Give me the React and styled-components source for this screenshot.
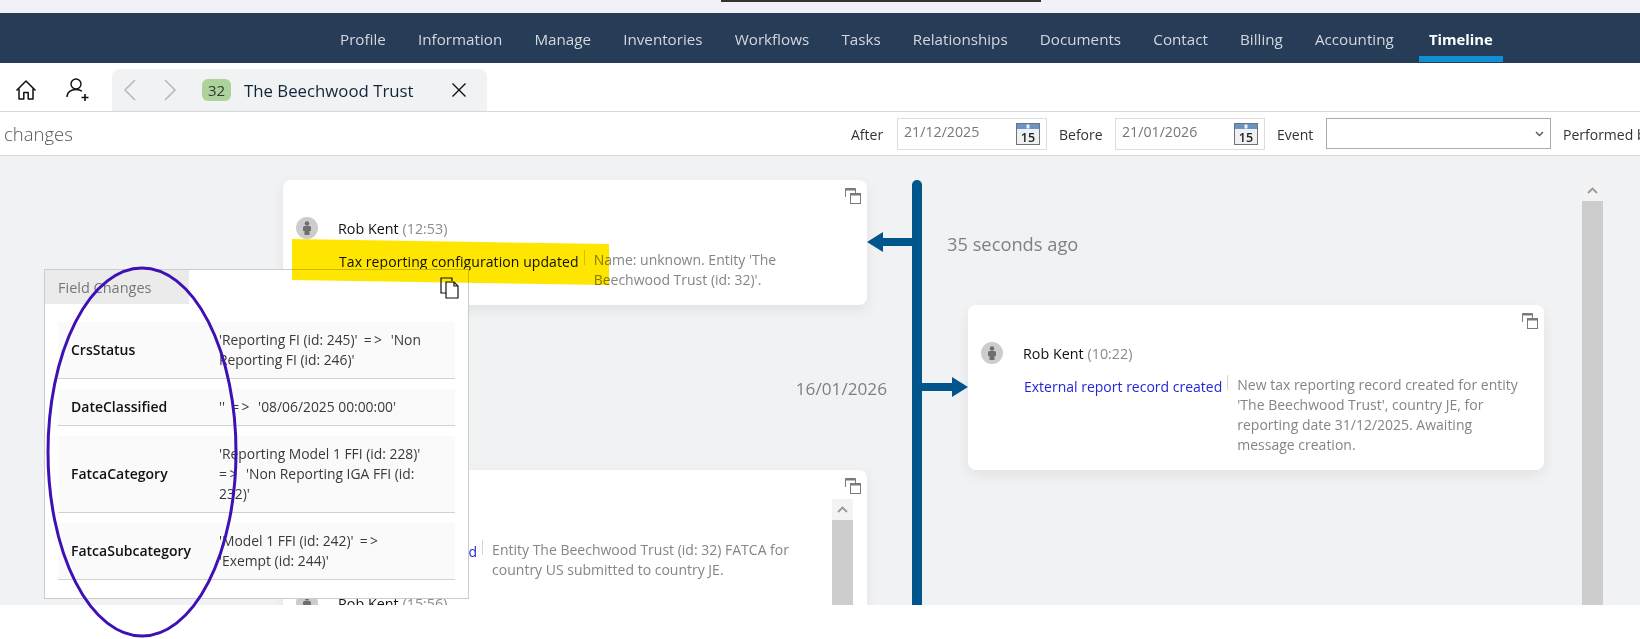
import styled, { createGlobalStyle } from 'styled-components'

const GlobalStyle = createGlobalStyle`
  html, body {
    margin: 0;
    padding: 0;
    background: #fff;
  }
  * {
    box-sizing: border-box;
  }
`

const Page = styled.div`
  position: relative;
  width: 1640px;
  height: 639px;
  overflow: hidden;
  background: #fff;
  font-family: "Open Sans", "Noto Sans", sans-serif;
  font-size: 14px;
  color: #222;
`

const TopStrip = styled.div`
  height: 13px;
  background: #f0f2f7;
  padding-left: 721px;
`

const ScreenEdge = styled.div`
  width: 320px;
  height: 2px;
  background: #333;
`

const NavBar = styled.nav`
  display: flex;
  gap: 12.2px;
  height: 50px;
  padding-left: 330px;
  background: #273c56;
`

const NavItem = styled.div`
  height: 49px;
  margin-left: ${({ $active }) => ($active ? '3px' : '0')};
  padding: 8px 10px 0;
  display: flex;
  align-items: center;
  border-bottom: 6px solid ${({ $active }) => ($active ? '#0f8fd6' : 'transparent')};
  color: ${({ $active }) => ($active ? '#fff' : '#d3d8df')};
  font-size: ${({ $active }) => ($active ? '14.8px' : '15.2px')};
  font-weight: ${({ $active }) => ($active ? 700 : 400)};
  white-space: nowrap;
`

const TabRow = styled.div`
  display: flex;
  align-items: flex-end;
  height: 49px;
  border-bottom: 1px solid #d8d8d8;
`

const QuickIcon = styled.div`
  display: flex;
  align-items: center;
  justify-content: center;
  width: ${({ $width }) => $width}px;
  height: 42px;
`

const Tab = styled.div`
  display: flex;
  align-items: center;
  width: 375px;
  height: 42px;
  background: #f0f2f4;
  border-radius: 8px 8px 0 0;
`

const TabArrow = styled.div`
  display: flex;
  justify-content: center;
  width: 40px;
  margin-left: ${({ $first }) => ($first ? '-2px' : '0')};
`

const Badge = styled.div`
  display: flex;
  align-items: center;
  justify-content: center;
  width: 29px;
  height: 22px;
  margin-left: 12px;
  border-radius: 6px;
  background: #aed29b;
  color: #2c3b34;
  font-size: 15px;
`

const TabTitle = styled.div`
  width: 207px;
  margin-left: 13px;
  color: #14233a;
  font-size: 16.8px;
  font-weight: 500;
  white-space: nowrap;
`

const FilterRow = styled.div`
  display: flex;
  align-items: center;
  height: 44px;
  border-bottom: 1px solid #d8d8d8;
  overflow: hidden;
  white-space: nowrap;
`

const ChangesTitle = styled.div`
  flex: none;
  width: 851px;
  padding-left: 4px;
  color: #555;
  font-size: 18.5px;
  font-weight: 300;
`

const FilterLabel = styled.div`
  flex: none;
  width: ${({ $width }) => $width}px;
  padding: 1px 0 0 ${({ $inset }) => ($inset ? '12px' : '0')};
  color: #333;
  font-size: 14px;
`

const DateField = styled.div`
  flex: none;
  display: flex;
  align-items: center;
  justify-content: space-between;
  width: 150px;
  height: 32px;
  padding: 0 6px;
  border: 1px solid #ddd;
`

const DateInput = styled.input`
  width: 105px;
  padding: 0 0 5px;
  border: 0;
  outline: 0;
  background: transparent;
  color: #777;
  font: 14.2px "Open Sans", sans-serif;
`

const SelectBox = styled.div`
  flex: none;
  display: flex;
  align-items: center;
  justify-content: flex-end;
  width: 225px;
  height: 31px;
  margin-right: 12px;
  padding-right: 6px;
  border: 1px solid #aaa;
`

const Main = styled.main`
  display: flex;
  height: 449px;
  padding: 24px 0 0 283px;
  background: #f0f2f4;
  overflow: hidden;
`

const LeftColumn = styled.div`
  flex: none;
  width: 584px;
`

const Spine = styled.div`
  flex: none;
  width: 10px;
  height: 100%;
  margin: 0 45px;
  background: #00568c;
  border-radius: 5px 5px 0 0;
`

const RightColumn = styled.div`
  flex: none;
  width: 576px;
  margin-left: 1px;
`

const Card = styled.section`
  position: relative;
  display: ${({ $split }) => ($split ? 'flex' : 'block')};
  height: ${({ $height }) => $height}px;
  background: #fff;
  border-radius: 8px;
  box-shadow: 0 5px 14px rgba(0, 0, 0, 0.07);
`

const RestoreButton = styled.svg`
  position: absolute;
  top: 8px;
  right: 6px;
  width: 16px;
  height: 16px;
`

const Arrow = styled.div`
  position: absolute;
  top: ${({ $top }) => $top}px;
  width: 46px;
  height: 20px;
  ${({ $left }) => ($left ? 'right: -46px;' : 'left: -46px;')}
  background: #00568c;
  clip-path: ${({ $left }) =>
    $left
      ? 'polygon(0 50%, 16px 0, 16px 6px, 100% 6px, 100% 14px, 16px 14px, 16px 100%)'
      : 'polygon(100% 50%, 30px 0, 30px 6px, 0 6px, 0 14px, 30px 14px, 30px 100%)'};
`

const DateLabel = styled.div`
  height: 165px;
  margin-right: -20px;
  padding-top: 70px;
  text-align: right;
  color: #808080;
  font-size: 17.2px;
  line-height: 28px;
`

const SinceLabel = styled.div`
  height: 125px;
  margin-left: -21px;
  padding-top: 50px;
  color: #808080;
  font-size: 18.3px;
  line-height: 28px;
`

const EntryList = styled.div`
  flex: 1;
  min-width: 0;
`

const Entry = styled.article`
  padding: ${({ $next }) => ($next ? '12px' : '37px')} 0 0 13px;
`

const EntryHead = styled.div`
  display: flex;
  align-items: center;
  gap: 20px;
  height: 22px;
`

const Avatar = styled.div`
  display: flex;
  align-items: center;
  justify-content: center;
  width: 22px;
  height: 22px;
  border-radius: 50%;
  background: #ccc;
`

const Author = styled.span`
  color: #111;
  font-size: 14.3px;
  font-weight: 500;
`

const Time = styled.span`
  margin-left: 4px;
  color: #8a8a8a;
  font-weight: 400;
`

const EntryBody = styled.div`
  display: flex;
  align-items: flex-start;
  margin: 11px 0 0 43px;
  line-height: 20px;
`

const EventName = styled.div`
  flex: none;
  padding-top: 2px;
  color: ${({ $link }) => ($link ? '#2424dc' : '#111')};
  letter-spacing: ${({ $tracking }) => $tracking || 0}px;
  white-space: nowrap;
`

const Divider = styled.div`
  flex: none;
  width: 1px;
  height: 15px;
  margin: 0 9px 0 5px;
  background: #d5d5d5;
`

const Description = styled.div`
  width: ${({ $width }) => $width}px;
  color: #858585;
`

const ScrollTrack = styled.div`
  flex: none;
  width: 21px;
  height: 100%;
  margin: ${({ $margin }) => $margin};
  display: flex;
  flex-direction: column;
`

const ScrollUp = styled.div`
  flex: none;
  display: flex;
  align-items: center;
  justify-content: center;
  height: 21px;
  background: #f3f3f3;
`

const ScrollThumb = styled.div`
  flex: 1;
  background: #cdcdcd;
`

const FieldPanel = styled.aside`
  position: absolute;
  left: 44px;
  top: 269px;
  width: 425px;
  height: 330px;
  background: #fff;
  border: 1px solid #ccc;
`

const PanelTab = styled.div`
  display: flex;
  align-items: center;
  width: 144px;
  height: 34px;
  padding-left: 13px;
  background: #ebebeb;
  color: #777;
  font-size: 14.5px;
`

const CopyIcon = styled.svg`
  position: absolute;
  top: 7px;
  left: 395px;
  width: 19px;
  height: 22px;
`

const FieldRows = styled.div`
  display: flex;
  flex-direction: column;
  gap: 10px;
  padding: 18px 13px 0;
`

const FieldRow = styled.div`
  display: grid;
  grid-template-columns: 148px 213px;
  align-items: center;
  padding: 8px 0 8px 13px;
  background: #fafafa;
  border-bottom: 1px solid #d2d2d2;
  line-height: 20px;
`

const FieldName = styled.div`
  color: #111;
  font-weight: 600;
`

const FieldValue = styled.div`
  color: #3a3a3a;
  font-size: 13.85px;
`

const Implies = styled.span`
  letter-spacing: 2.5px;
`

const Highlight = styled.div`
  position: absolute;
  left: 292px;
  top: 239px;
  width: 317px;
  height: 46px;
  background: #ffe600;
  mix-blend-mode: multiply;
  clip-path: polygon(0 0, 100% 5px, 100% 100%, 0 41px);
  pointer-events: none;
`

const Circled = styled.svg`
  position: absolute;
  left: 46px;
  top: 266px;
  width: 192px;
  height: 372px;
  pointer-events: none;
`

const fields = [
  { name: 'CrsStatus', from: "'Reporting FI (id: 245)'", to: "'Non Reporting FI (id: 246)'" },
  { name: 'DateClassified', from: "''", to: "'08/06/2025 00:00:00'" },
  { name: 'FatcaCategory', from: "'Reporting Model 1 FFI (id: 228)'", to: "'Non Reporting IGA FFI (id: 232)'" },
  { name: 'FatcaSubcategory', from: "'Model 1 FFI (id: 242)'", to: "'Exempt (id: 244)'" },
]

const navItems = ['Profile', 'Information', 'Manage', 'Inventories', 'Workflows', 'Tasks', 'Relationships', 'Documents', 'Contact', 'Billing', 'Accounting']

function HomeIcon() {
  return (
    <svg width="24" height="24" viewBox="0 0 24 24" fill="none" stroke="#111" strokeWidth="1.5" strokeLinejoin="round">
      <path d="M2.5 12.5 12 3l9.5 9.5" />
      <path d="M5 10.5V21h4.8v-6.5h4.4V21H19V10.5" />
    </svg>
  )
}

function UserPlusIcon() {
  return (
    <svg width="26" height="26" viewBox="0 0 26 26" fill="none" stroke="#111" strokeWidth="1.4">
      <circle cx="11" cy="7" r="5" />
      <path d="M2 20c0-5 4-7.5 9-7.5 2.5 0 4.5.6 6 1.8" />
      <path d="M20 17v7M16.5 20.500h7" strokeWidth="1.6" />
    </svg>
  )
}

function TabChevron({ flip }) {
  return (
    <svg width="14" height="24" viewBox="0 0 14 24" fill="none" stroke="#b4b7ba" strokeWidth="1.5">
      <path d={flip ? 'M2 2l10 10L2 22' : 'M12 2L2 12l10 10'} />
    </svg>
  )
}

function CloseIcon() {
  return (
    <svg width="16" height="16" viewBox="0 0 16 16" stroke="#111" strokeWidth="1.4">
      <path d="M1.500 1.500l13 13M14.500 1.500l-13 13" />
    </svg>
  )
}

function CalendarIcon() {
  return (
    <svg width="24" height="22" viewBox="0 0 24 22">
      <rect x="0.500" y="0.500" width="23" height="21" fill="#eef0f2" stroke="#6e7378" />
      <rect x="1" y="1" width="22" height="5" fill="#6a94c4" />
      <rect x="10.500" y="1.500" width="3" height="4" fill="#e8f0fa" />
      <text x="12" y="18.500" textAnchor="middle" fontFamily="Open Sans, sans-serif" fontSize="12.500" fontWeight="600" fill="#222">15</text>
    </svg>
  )
}

function Restore() {
  return (
    <RestoreButton viewBox="0 0 16 16" fill="none" stroke="#7a7a7a">
      <path d="M.5 9V.5h10V5" />
      <path d="M.5 1.500h10" strokeWidth="2" />
      <rect x="5.500" y="5.500" width="10" height="10" fill="#fff" />
      <path d="M5.500 6.500h10" strokeWidth="2" />
    </RestoreButton>
  )
}

function Person() {
  return (
    <svg width="12" height="14" viewBox="0 0 12 14" fill="#6f6f6f">
      <circle cx="6" cy="2.500" r="2.300" />
      <path d="M2 6.500C2 5.500 3 5 4 5h4c1 0 2 .5 2 1.500V10H8.500v4h-5v-4H2z" />
    </svg>
  )
}

function ChevronUp() {
  return (
    <svg width="11" height="7" viewBox="0 0 11 7" fill="none" stroke="#9a9a9a" strokeWidth="1.800">
      <path d="M1 6l4.500-4.500L10 6" />
    </svg>
  )
}

function TimelineEntry({ time, event, link, tracking, next, width, children }) {
  return (
    <Entry $next={next}>
      <EntryHead>
        <Avatar><Person /></Avatar>
        <Author>Rob Kent<Time>({time})</Time></Author>
      </EntryHead>
      {event && (
        <EntryBody>
          <EventName $link={link} $tracking={tracking}>{event}</EventName>
          <Divider />
          <Description $width={width}>{children}</Description>
        </EntryBody>
      )}
    </Entry>
  )
}

export default function App() {
  return (
    <Page>
      <GlobalStyle />
      <TopStrip><ScreenEdge /></TopStrip>
      <NavBar>
        {navItems.map((item) => <NavItem key={item}>{item}</NavItem>)}
        <NavItem $active>Timeline</NavItem>
      </NavBar>
      <TabRow>
        <QuickIcon $width={52}><HomeIcon /></QuickIcon>
        <QuickIcon $width={52}><UserPlusIcon /></QuickIcon>
        <QuickIcon $width={8} />
        <Tab>
          <TabArrow $first><TabChevron /></TabArrow>
          <TabArrow><TabChevron flip /></TabArrow>
          <Badge>32</Badge>
          <TabTitle>The Beechwood Trust</TabTitle>
          <CloseIcon />
        </Tab>
      </TabRow>
      <FilterRow>
        <ChangesTitle>changes</ChangesTitle>
        <FilterLabel $width={46}>After</FilterLabel>
        <DateField>
          <DateInput readOnly value="21/12/2025" />
          <CalendarIcon />
        </DateField>
        <FilterLabel $width={68} $inset>Before</FilterLabel>
        <DateField>
          <DateInput readOnly value="21/01/2026" />
          <CalendarIcon />
        </DateField>
        <FilterLabel $width={61} $inset>Event</FilterLabel>
        <SelectBox><svg width="9" height="6" viewBox="0 0 9 6" fill="none" stroke="#555" strokeWidth="1.400"><path d="M1 1l3.500 3.500L8 1" /></svg></SelectBox>
        <FilterLabel $width={90}>Performed by</FilterLabel>
      </FilterRow>
      <Main>
        <LeftColumn>
          <Card $height={125}>
            <Restore />
            <Arrow $left $top={52} />
            <TimelineEntry time="12:53" event="Tax reporting configuration updated" tracking={0.08} width={225}>
              Name: unknown. Entity 'The Beechwood Trust (id: 32)'.
            </TimelineEntry>
          </Card>
          <DateLabel>16/01/2026</DateLabel>
          <Card $height={400} $split>
            <Restore />
            <EntryList>
              <TimelineEntry time="13:11" event="FATCA file submitted" link tracking={0.15} width={335}>
                Entity The Beechwood Trust (id: 32) FATCA for country US submitted to country JE.
              </TimelineEntry>
              <TimelineEntry next time="15:56" />
            </EntryList>
            <ScrollTrack $margin="29px 14px 0 0">
              <ScrollUp><ChevronUp /></ScrollUp>
              <ScrollThumb />
            </ScrollTrack>
          </Card>
        </LeftColumn>
        <Spine />
        <RightColumn>
          <SinceLabel>35 seconds ago</SinceLabel>
          <Card $height={165}>
            <Restore />
            <Arrow $top={72} />
            <TimelineEntry time="10:22" event="External report record created" link width={290}>
              New tax reporting record created for entity 'The Beechwood Trust', country JE, for reporting date 31/12/2025. Awaiting message creation.
            </TimelineEntry>
          </Card>
        </RightColumn>
        <ScrollTrack $margin="0 0 0 38px">
          <ScrollUp><ChevronUp /></ScrollUp>
          <ScrollThumb />
        </ScrollTrack>
      </Main>
      <FieldPanel>
        <PanelTab>Field Changes</PanelTab>
        <CopyIcon viewBox="0 0 19 22" fill="none" stroke="#111" strokeWidth="1.200">
          <path d="M12 4V1H1v15h5" />
          <path d="M6 5h8l4 4v12H6z" fill="#fff" />
          <path d="M14 5v4h4" />
        </CopyIcon>
        <FieldRows>
          {fields.map((field) => (
            <FieldRow key={field.name}>
              <FieldName>{field.name}</FieldName>
              <FieldValue>{field.from}<Implies> =&gt; </Implies>{field.to}</FieldValue>
            </FieldRow>
          ))}
        </FieldRows>
      </FieldPanel>
      <Highlight />
      <Circled viewBox="0 0 192 372">
        <ellipse cx="96" cy="186" rx="94" ry="184" fill="none" stroke="#3f10b4" strokeWidth="3" />
      </Circled>
    </Page>
  )
}
